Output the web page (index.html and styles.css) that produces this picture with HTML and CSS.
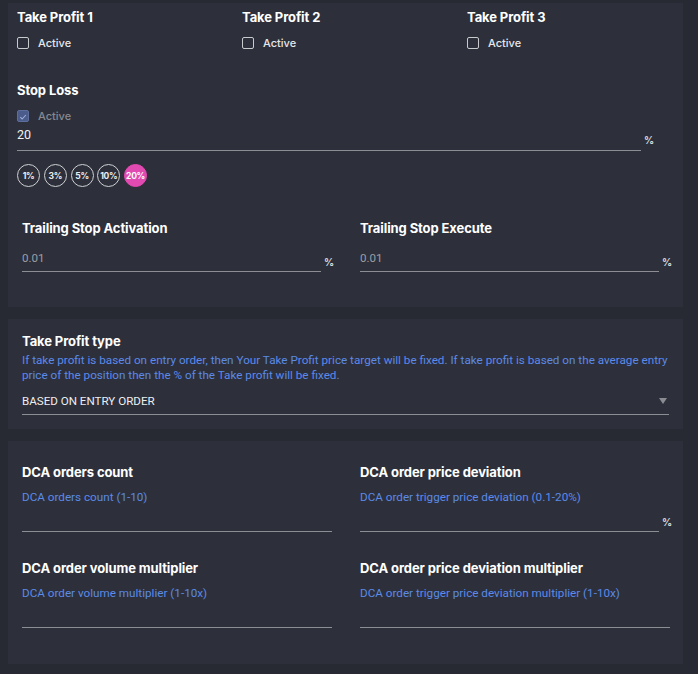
FILE: index.html
```html
<!DOCTYPE html>
<html lang="en">
<head>
    <meta charset="UTF-8">
    <meta name="viewport" content="width=device-width, initial-scale=1.0">
    <title>Bot settings</title>
    <link rel="stylesheet" href="styles.css">
</head>
<body>

    <div class="panel panel-main">
        <div class="tp-row">
            <div class="tp-col">
                <div class="title">Take Profit 1</div>
                <label class="check"><span class="box"></span>Active</label>
            </div>
            <div class="tp-col">
                <div class="title">Take Profit 2</div>
                <label class="check"><span class="box"></span>Active</label>
            </div>
            <div class="tp-col">
                <div class="title">Take Profit 3</div>
                <label class="check"><span class="box"></span>Active</label>
            </div>
        </div>

        <div class="stop-loss">
            <div class="title">Stop Loss</div>
            <label class="check disabled">
                <span class="box checked">
                    <svg viewBox="0 0 12 12" width="12" height="12"><path d="M2.8 6.2 L5 8.4 L9.4 3.6" fill="none" stroke="#9fb0d8" stroke-width="1.3"/></svg>
                </span>Active
            </label>
            <div class="field field-wide">
                <div class="input value">20</div>
                <span class="unit">%</span>
            </div>
            <div class="chips">
                <span class="chip">1%</span>
                <span class="chip">3%</span>
                <span class="chip">5%</span>
                <span class="chip">10%</span>
                <span class="chip active">20%</span>
            </div>
        </div>

        <div class="two-col trailing">
            <div class="cell">
                <div class="title">Trailing Stop Activation</div>
                <div class="field">
                    <div class="input muted">0.01</div>
                    <span class="unit">%</span>
                </div>
            </div>
            <div class="cell">
                <div class="title">Trailing Stop Execute</div>
                <div class="field">
                    <div class="input muted">0.01</div>
                    <span class="unit">%</span>
                </div>
            </div>
        </div>
    </div>

    <div class="panel panel-type">
        <div class="title">Take Profit type</div>
        <p class="hint">If take profit is based on entry order, then Your Take Profit price target will be fixed. If take profit is based on the average entry price of the position then the % of the Take profit will be fixed.</p>
        <div class="select">
            <span>BASED ON ENTRY ORDER</span>
            <span class="arrow"></span>
        </div>
    </div>

    <div class="panel panel-dca">
        <div class="two-col">
            <div class="cell">
                <div class="title">DCA orders count</div>
                <div class="hint">DCA orders count (1-10)</div>
                <div class="field tall">
                    <div class="input"></div>
                </div>
            </div>
            <div class="cell">
                <div class="title">DCA order price deviation</div>
                <div class="hint">DCA order trigger price deviation (0.1-20%)</div>
                <div class="field tall">
                    <div class="input"></div>
                    <span class="unit">%</span>
                </div>
            </div>
            <div class="cell">
                <div class="title">DCA order volume multiplier</div>
                <div class="hint">DCA order volume multiplier (1-10x)</div>
                <div class="field tall">
                    <div class="input"></div>
                </div>
            </div>
            <div class="cell">
                <div class="title">DCA order price deviation multiplier</div>
                <div class="hint">DCA order trigger price deviation multiplier (1-10x)</div>
                <div class="field tall">
                    <div class="input"></div>
                </div>
            </div>
        </div>
    </div>

</body>
</html>
```

FILE: styles.css
```css
* {
    margin: 0;
    padding: 0;
    box-sizing: border-box;
}

body {
    font-family: Inter, 'Noto Sans', sans-serif;
    background-color: #272a33;
    color: #fff;
    padding-top: 3px;
    overflow: hidden;
}

.panel {
    background-color: #2d303b;
    width: 675px;
    margin-left: 8px;
    margin-bottom: 12px;
}

.title {
    font-size: 13px;
    font-weight: 700;
    line-height: 16px;
    color: #fff;
    letter-spacing: -0.1px;
}

/* top block */
.panel-main {
    height: 304px;
    padding: 6px 0 0 9px;
}

.tp-row {
    display: grid;
    grid-template-columns: repeat(3, 225px);
}

.check {
    display: flex;
    align-items: center;
    gap: 9px;
    height: 13px;
    margin-top: 11px;
    font-size: 11px;
    font-weight: 500;
    color: #e6e7ea;
}

.check .box {
    width: 12px;
    height: 12px;
    border: 1px solid #c9cacd;
    border-radius: 2px;
    display: flex;
}

.check .box.checked {
    background-color: #4a5b8c;
    border-color: #5d6d9c;
}

.check.disabled {
    color: #868991;
}

.stop-loss {
    margin-top: 33px;
}

.stop-loss .check {
    margin-top: 11px;
}

.field {
    display: flex;
    align-items: flex-end;
    width: 310px;
}

.field .input {
    flex: 1;
    border-bottom: 1px solid #8c8e93;
    font-family: Roboto, Inter, sans-serif;
    font-size: 11.6px;
    line-height: 14px;
    padding-bottom: 6px;
}

.field .value {
    color: #f2f2f2;
    font-size: 12.5px;
}

.field .muted {
    color: #9c9ea5;
}

.field .unit {
    width: 8px;
    margin-left: 3px;
    font-size: 10px;
    font-weight: 700;
    color: #d8d9dc;
    margin-bottom: 4px;
}

.field-wide {
    width: 635px;
    margin-top: 6px;
}

.field-wide .input {
    padding-bottom: 8px;
}

.field-wide .unit {
    margin-bottom: 5px;
}

.chips {
    display: flex;
    gap: 3.75px;
    margin-top: 13px;
}

.chip {
    width: 23px;
    height: 23px;
    border-radius: 50%;
    border: 1px solid #cfd0d3;
    display: flex;
    align-items: center;
    justify-content: center;
    font-size: 8.5px;
    font-weight: 700;
    color: #eee;
    letter-spacing: -0.3px;
}

.chip.active {
    background-color: #e14ab0;
    border-color: #e14ab0;
    color: #fff;
}

.two-col {
    display: grid;
    grid-template-columns: 310px 310px;
    column-gap: 28px;
}

.trailing {
    margin-top: 33px;
    margin-left: 5px;
}

.trailing .field {
    margin-top: 15px;
}

/* take profit type */
.panel-type {
    height: 110px;
    padding: 14px 14px 0 14px;
}

.hint {
    font-family: Roboto, Inter, sans-serif;
    font-size: 11.7px;
    line-height: 15px;
    color: #5b8ae8;
    margin-top: 4px;
}

.select {
    display: flex;
    justify-content: space-between;
    align-items: center;
    margin-top: 11px;
    padding-bottom: 6px;
    border-bottom: 1px solid #8c8e93;
    font-family: Roboto, Inter, sans-serif;
    font-size: 11.6px;
    line-height: 14px;
    color: #eceef1;
}

.select .arrow {
    width: 0;
    height: 0;
    border-left: 4px solid transparent;
    border-right: 4px solid transparent;
    border-top: 6px solid #8a8c92;
    margin-right: 2px;
}

/* dca */
.panel-dca {
    height: 223px;
    padding: 23px 14px 0 14px;
}

.panel-dca .cell {
    margin-bottom: 28px;
}

.panel-dca .hint {
    margin-top: 10px;
}

.field.tall {
    height: 27px;
}

.field.tall .input {
    height: 27px;
}
```
